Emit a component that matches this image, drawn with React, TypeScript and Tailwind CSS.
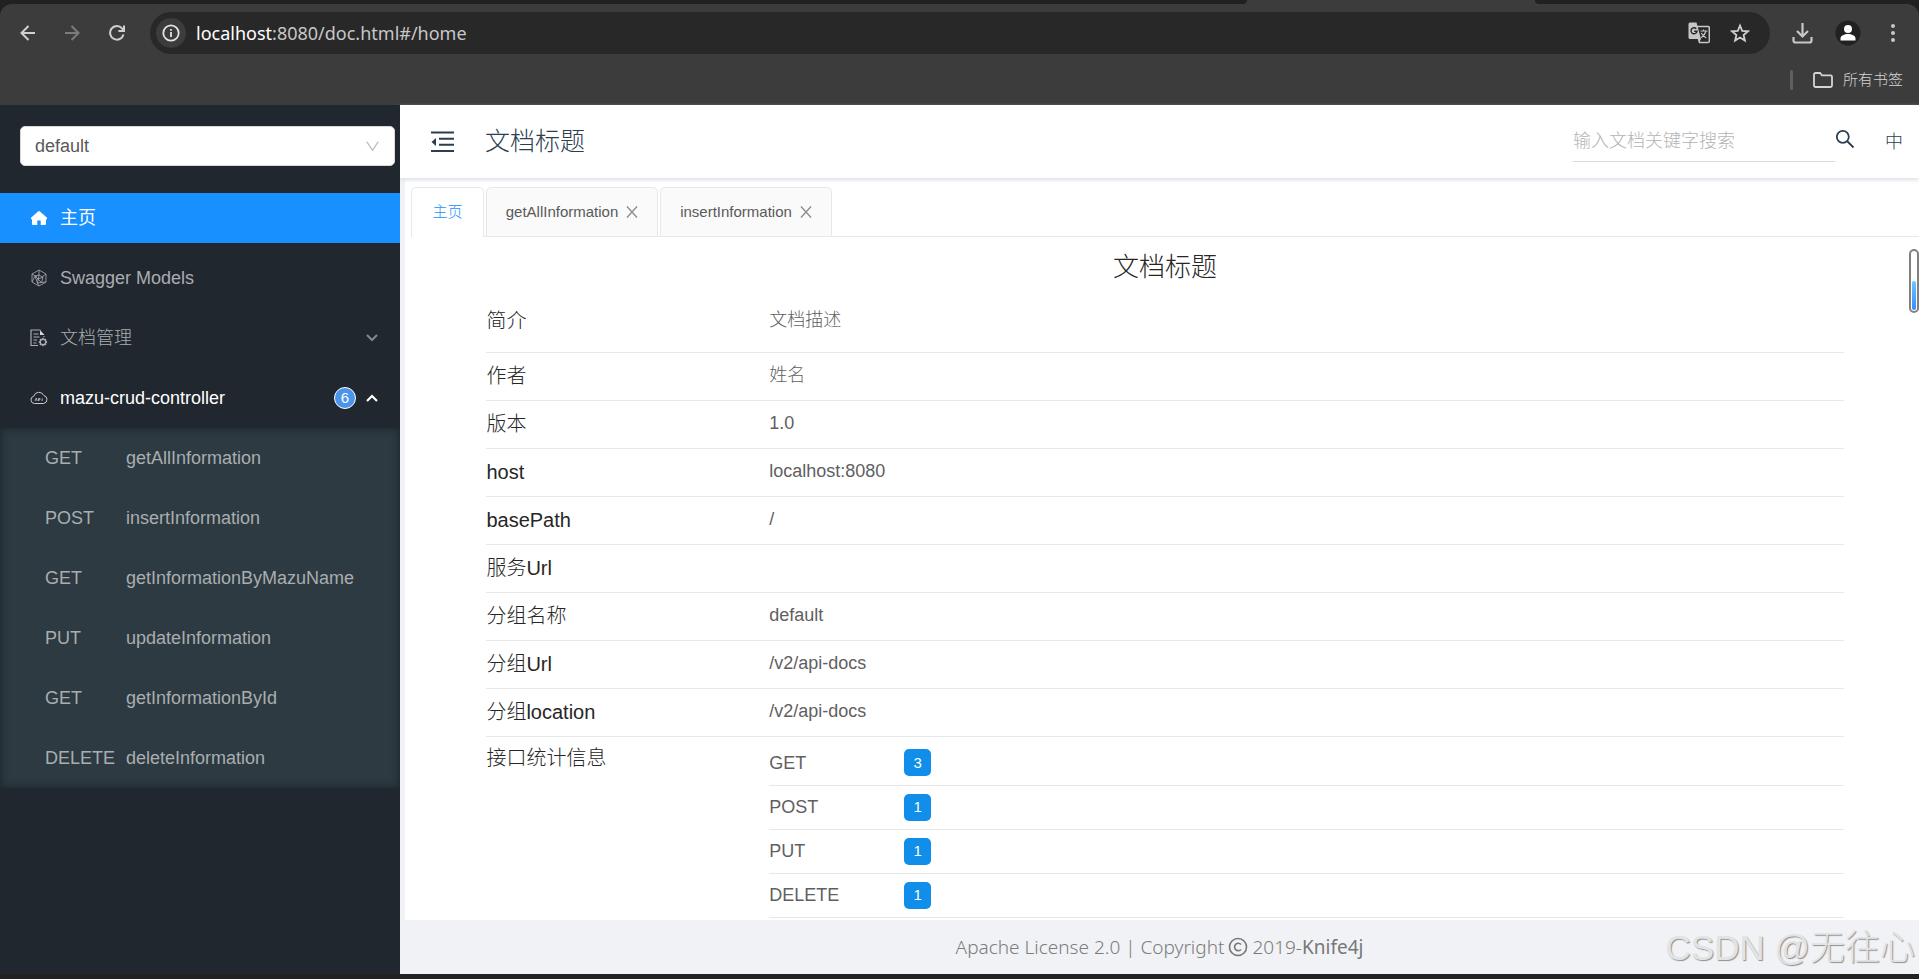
import type { ReactNode } from 'react'

const endpoints = [
  { method: 'GET', name: 'getAllInformation' },
  { method: 'POST', name: 'insertInformation' },
  { method: 'GET', name: 'getInformationByMazuName' },
  { method: 'PUT', name: 'updateInformation' },
  { method: 'GET', name: 'getInformationById' },
  { method: 'DELETE', name: 'deleteInformation' },
]

const details = [
  { label: '作者', value: '姓名' },
  { label: '版本', value: '1.0' },
  { label: 'host', value: 'localhost:8080' },
  { label: 'basePath', value: '/' },
  { label: '服务Url', value: '' },
  { label: '分组名称', value: 'default' },
  { label: '分组Url', value: '/v2/api-docs' },
  { label: '分组location', value: '/v2/api-docs' },
]

const stats = [
  { method: 'GET', count: 3 },
  { method: 'POST', count: 1 },
  { method: 'PUT', count: 1 },
  { method: 'DELETE', count: 1 },
]

const openTabs = ['getAllInformation', 'insertInformation']

function BrowserBar() {
  return (
    <header className="shrink-0 bg-[#202120] font-['Noto_Sans','Noto_Sans_CJK_SC',sans-serif]">
      <div className="flex h-1 justify-between bg-[#3c3c3c]">
        <div className="w-[65%] rounded-br-xl bg-[#202120]" />
        <div className="w-1/5 rounded-bl-xl bg-[#202120]" />
      </div>
      <div className="rounded-t-xl bg-[#3c3c3c] pt-2">
        <div className="flex h-[42px] items-center">
          <button aria-label="Back" className="ml-[18px] flex size-5 items-center justify-center text-[#d0d0d0]">
            <svg width="16" height="16" viewBox="0 0 16 16" fill="none" stroke="currentColor" strokeWidth="2">
              <path d="M15 8H2M8.5 1 1.5 8l7 7" />
            </svg>
          </button>
          <button aria-label="Forward" className="ml-6 flex size-5 items-center justify-center text-[#7c7c7c]">
            <svg width="16" height="16" viewBox="0 0 16 16" fill="none" stroke="currentColor" strokeWidth="2">
              <path d="M1 8h13M7.5 1l7 7-7 7" />
            </svg>
          </button>
          <button aria-label="Reload" className="ml-[25px] flex size-5 items-center justify-center text-[#d0d0d0]">
            <svg width="16" height="16" viewBox="0 0 16 16" fill="none" stroke="currentColor" strokeWidth="2">
              <path d="M14.5 9.5A6.8 6.8 0 1 1 13 3.3L14.8 5.500M15 .5v5.600H9.400" />
            </svg>
          </button>
          <div className="ml-[23px] flex h-[42px] flex-1 items-center rounded-full bg-[#282828] pr-5 pl-[6px]">
            <button aria-label="Site information" className="flex size-[30px] items-center justify-center rounded-full bg-[#3c3c3c] text-[#e3e3e3]">
              <svg width="18" height="18" viewBox="0 0 18 18" fill="none" stroke="currentColor" strokeWidth="1.8">
                <circle cx="9" cy="9" r="7.7" />
                <path d="M9 8v5M9 5v1.8" />
              </svg>
            </button>
            <div className="ml-[10px] flex-1 text-lg text-[#c7c7c7]">
              <span className="text-white">localhost</span>:8080/doc.html#/home
            </div>
            <button aria-label="Translate" className="text-[#c7c7c7]">
              <svg width="22" height="22" viewBox="0 0 22 22">
                <path d="M9 4.500h11a1.300 1.300 0 0 1 1.300 1.300v13.400a1.300 1.300 0 0 1-1.300 1.300h-8.500L10.500 17" fill="none" stroke="currentColor" strokeWidth="1.500" />
                <path d="M2 .5h6.500L13 17H2A1.500 1.500 0 0 1 .5 15.500V2A1.500 1.500 0 0 1 2 .5Z" fill="currentColor" />
                <path d="M8.300 6.800A3 3 0 1 0 9 9.300H6.200" fill="none" stroke="#282828" strokeWidth="1.400" />
                <path d="M12.500 9h7M15.600 7.500V9M18 9c-.7 3-2.500 5-4.800 6.700M13.300 11c1 2 2.700 3.700 5 5" fill="none" stroke="currentColor" strokeWidth="1.200" />
                <path d="M10.300 17H13l-1.600 3Z" fill="currentColor" />
              </svg>
            </button>
            <button aria-label="Bookmark" className="ml-5 text-[#d0d0d0]">
              <svg width="20" height="20" viewBox="0 0 20 20" fill="none" stroke="currentColor" strokeWidth="1.800">
                <path d="m10 2.500 2.200 5.300 5.700.5-4.300 3.700 1.300 5.600-4.900-3-4.900 3 1.300-5.600-4.300-3.700 5.700-.5Z" />
              </svg>
            </button>
          </div>
          <button aria-label="Downloads" className="ml-[22px] text-[#c7c7c7]">
            <svg width="21" height="21" viewBox="0 0 21 21" fill="none" stroke="currentColor" strokeWidth="2.200">
              <path d="M10.500 0v13M5 8l5.500 5.500L16 8M1.500 14v3.500a2 2 0 0 0 2 2h14a2 2 0 0 0 2-2V14" />
            </svg>
          </button>
          <button aria-label="Profile" className="ml-[22px]">
            <svg width="26" height="26" viewBox="0 0 26 26">
              <circle cx="13" cy="13" r="12.500" fill="#202120" />
              <circle cx="13" cy="9" r="4" fill="#fff" />
              <path d="M5.500 20.500v-2c0-3 4-4.500 7.500-4.500s7.500 1.500 7.500 4.500v2Z" fill="#fff" />
            </svg>
          </button>
          <button aria-label="Menu" className="mr-6 ml-[30px] text-[#c7c7c7]">
            <svg width="4" height="20" viewBox="0 0 4 20" fill="currentColor">
              <circle cx="2" cy="3" r="2" />
              <circle cx="2" cy="10" r="2" />
              <circle cx="2" cy="17" r="2" />
            </svg>
          </button>
        </div>
        <div className="flex h-[51px] items-center justify-end pr-4">
          <div className="mr-5 h-5 w-[3px] rounded bg-[#5f5f5f]" />
          <button className="flex items-center gap-[10px] text-[15px] font-light text-[#d4d4d4]">
            <svg width="20" height="16" viewBox="0 0 20 16" fill="none" stroke="currentColor" strokeWidth="1.800">
              <path d="M1 2.500A1.500 1.500 0 0 1 2.500 1H7l2 2.300h8.500A1.500 1.500 0 0 1 19 4.800v8.700a1.500 1.500 0 0 1-1.500 1.500h-15A1.500 1.500 0 0 1 1 13.500Z" />
            </svg>
            所有书签
          </button>
        </div>
      </div>
    </header>
  )
}

function MenuItem({ icon, children, active }: { icon: ReactNode; children: ReactNode; active?: boolean }) {
  return (
    <a
      href="#"
      className={
        active
          ? 'my-[5px] flex h-[50px] items-center gap-3 bg-[#1890ff] pr-[22px] pl-[30px] text-white'
          : 'my-[5px] flex h-[50px] items-center gap-3 pr-[22px] pl-[30px]'
      }
    >
      {icon}
      {children}
    </a>
  )
}

function Sidebar() {
  return (
    <aside className="z-10 w-[400px] shrink-0 overflow-hidden bg-[#20272e] text-[#a9adb0]">
      <div className="relative mt-[21px] mb-[22px] ml-5 w-[375px]">
        <select
          aria-label="Group"
          className="h-10 w-full appearance-none rounded-[5px] border border-[#d9d9d9] bg-white px-[14px] text-lg text-[#595959]"
        >
          <option>default</option>
        </select>
        <svg className="pointer-events-none absolute top-[15px] right-4" width="13" height="11" viewBox="0 0 13 11" fill="none" stroke="#bfbfbf" strokeWidth="1.400">
          <path d="m.7.7 5.800 8.600L12.300.7" />
        </svg>
      </div>
      <nav className="flex flex-col text-lg">
        <MenuItem
          active
          icon={
            <svg width="18" height="18" viewBox="0 0 18 18" fill="currentColor">
              <path d="M8.300 2.300a1 1 0 0 1 1.400 0L17 8.800v1.400h-1V15a1 1 0 0 1-1 1h-4.300v-4.500H7.300V16H3a1 1 0 0 1-1-1v-4.800H1V8.800Z" />
            </svg>
          }
        >
          主页
        </MenuItem>
        <MenuItem
          icon={
            <svg width="18" height="18" viewBox="0 0 18 18" fill="none" stroke="currentColor">
              <path d="m9 1 7 4v8l-7 4-7-4V5ZM9 1v5M2 5l5 3M16 5l-4 3M5 7l4-1 4 2.500-1.500 5-4 .5L5 7Zm0 0-3 6M7.500 14 9 17M11.500 13.500 16 13M9 6l-1.500 8M5 7l6.500 6.500M13 8.500 7 10" strokeWidth=".8" />
            </svg>
          }
        >
          Swagger Models
        </MenuItem>
        <MenuItem
          icon={
            <svg width="18" height="18" viewBox="0 0 18 18" fill="none" stroke="currentColor">
              <path d="M8 16.500H1V1h9.500M14 7v1M3.500 5h5M3.500 8h6M3.500 11h3.500M3.500 14h3" strokeWidth="1.200" />
              <path d="M10 1v5h4.500Z" fill="#d8d8d8" stroke="none" />
              <circle cx="13" cy="13" r="2.800" strokeWidth="1.400" />
              <path d="M13 8.800v1.400M13 15.800v1.400M8.800 13h1.400M15.800 13h1.400M10 10l1 1M15 15l1 1M16 10l-1 1M11 15l-1 1" strokeWidth="1.400" />
            </svg>
          }
        >
          <span className="flex-1 font-light">文档管理</span>
          <svg width="12" height="8" viewBox="0 0 12 8" fill="none" stroke="#83888c" strokeWidth="2">
            <path d="m1 1 5 5 5-5" />
          </svg>
        </MenuItem>
        <MenuItem
          icon={
            <svg width="18" height="18" viewBox="0 0 18 18" fill="none" stroke="#c8cacc">
              <path d="M4.500 14.500a3.700 3.700 0 0 1-.7-7.300 5.300 5.300 0 0 1 10-.7 4.100 4.100 0 0 1 0 8Z" />
              <path d="m5 12 1.300-3 .9 3M8.500 12V9.500h1.600l-.3 1.500H8.500M12 12l.4-2.700" strokeWidth=".8" />
            </svg>
          }
        >
          <span className="flex-1 text-white">mazu-crud-controller</span>
          <span className="flex items-center gap-[10px]">
            <span className="flex size-[22px] items-center justify-center rounded-full border border-white bg-[#4a95e9] text-[15px] text-white">
              6
            </span>
            <svg width="12" height="8" viewBox="0 0 12 8" fill="none" stroke="#fff" strokeWidth="2.200">
              <path d="m1 7 5-5 5 5" />
            </svg>
          </span>
        </MenuItem>
        <ul className="flex flex-col bg-[#2d3a41] shadow-[inset_0_0_10px_#1c2328]">
          {endpoints.map(({ method, name }) => (
            <li key={name} className="py-[5px]">
              <a href="#" className="flex h-[50px] items-center pl-[45px]">
                <span className="w-[81px]">{method}</span>
                {name}
              </a>
            </li>
          ))}
        </ul>
      </nav>
    </aside>
  )
}

function TopHeader() {
  return (
    <div className="relative flex h-[73px] shrink-0 items-center bg-white pr-4 pl-[31px] text-[#2c3e50] shadow-[0_2px_4px_#d9e0e6]">
      <button aria-label="Collapse menu">
        <svg width="23" height="22" viewBox="0 0 23 22" fill="none" stroke="currentColor" strokeWidth="2">
          <path d="M0 1.500h23M8 7.700h15M8 13.700h15M0 20h23" />
          <path d="M5 7v8L.5 11Z" fill="currentColor" stroke="none" />
        </svg>
      </button>
      <h1 className="ml-[31px] flex-1 text-[25px] font-light">文档标题</h1>
      <input
        type="text"
        aria-label="输入文档关键字搜索"
        placeholder="输入文档关键字搜索"
        className="h-10 w-[262px] border-b border-[#d9d9d9] text-lg font-light placeholder:text-[#b4b4b4]"
      />
      <button aria-label="Search" className="pb-[5px]">
        <svg width="20" height="20" viewBox="0 0 20 20" fill="none" stroke="currentColor" strokeWidth="1.800">
          <circle cx="7.800" cy="7.800" r="6" />
          <path d="m12 12 6.500 6.500" />
        </svg>
      </button>
      <button className="ml-[30px] text-lg font-light">中</button>
    </div>
  )
}

function TabBar() {
  return (
    <div role="tablist" className="flex h-[50px] items-end gap-[2px] text-[15px] text-[#595959] shadow-[inset_0_-1px_0_#e8e8e8]">
      <button role="tab" aria-selected="true" className="h-[50px] w-[73px] rounded-t-[5px] border border-b-0 border-[#e8e8e8] bg-white font-light text-[#1890ff]">
        主页
      </button>
      {openTabs.map((tab) => (
        <div key={tab} className="flex h-[50px] w-[172px] items-center justify-center gap-2 rounded-t-[5px] border border-[#e8e8e8] bg-[#fafafa]">
          <button role="tab">{tab}</button>
          <button aria-label={'Close ' + tab}>
            <svg width="12" height="12" viewBox="0 0 12 12" stroke="#8c8c8c" strokeWidth="1.300">
              <path d="m1 .5 10 11M11 .5 1 11.500" />
            </svg>
          </button>
        </div>
      ))}
    </div>
  )
}

function ApiInfo() {
  return (
    <section className="mx-auto w-[90%] text-lg font-light text-[#5f5f5f]">
      <h2 className="pt-[9px] text-center text-[26px] leading-[42px] text-[#262626]">文档标题</h2>
      <dl>
        <div className="flex h-[65px] border-b border-[#e8e8e8] pt-[14px]">
          <dt className="w-5/24 text-xl leading-[38px] text-[#262626]">简介</dt>
          <dd className="leading-[36px]">文档描述</dd>
        </div>
        {details.map(({ label, value }) => (
          <div key={label} className="flex h-12 border-b border-[#e8e8e8] pt-1">
            <dt className="w-5/24 text-xl leading-[38px] text-[#262626]">{label}</dt>
            <dd className="leading-[36px]">{value}</dd>
          </div>
        ))}
        <div className="flex">
          <dt className="w-5/24 pt-[2px] text-xl leading-[38px] text-[#262626]">接口统计信息</dt>
          <dd className="flex-1 pt-1">
            <table className="w-full table-fixed text-left">
              <tbody>
                {stats.map(({ method, count }) => (
                  <tr key={method} className="h-11 border-b border-[#e8e8e8]">
                    <th scope="row" className="w-[135px] font-normal">
                      {method}
                    </th>
                    <td>
                      <span className="flex size-[27px] items-center justify-center rounded-[5px] bg-[#108ee9] text-[15px] text-white">
                        {count}
                      </span>
                    </td>
                  </tr>
                ))}
              </tbody>
            </table>
          </dd>
        </div>
      </dl>
    </section>
  )
}

export default function App() {
  return (
    <div className="flex h-screen flex-col overflow-hidden bg-[#202120] font-['Liberation_Sans','Noto_Sans_CJK_SC',sans-serif]">
      <BrowserBar />
      <div className="mb-[5px] flex min-h-0 flex-1">
        <Sidebar />
        <main className="relative flex min-w-0 flex-1 flex-col bg-[#f0f2f5]">
          <TopHeader />
          <div className="ml-[5px] min-h-0 flex-1 overflow-hidden bg-white pt-[9px] pl-[6px]">
            <TabBar />
            <ApiInfo />
          </div>
          <footer className="flex h-[54px] shrink-0 items-center justify-center gap-1 font-['Noto_Sans','Noto_Sans_CJK_SC',sans-serif] text-[19px] font-light text-[#7c7c7c]">
            Apache License 2.0 | Copyright
            <svg width="20" height="20" viewBox="0 0 20 20" fill="none" stroke="#777" strokeWidth="1.600">
              <circle cx="10" cy="10" r="8.500" />
              <path d="M13 7.500a3.700 3.700 0 1 0 0 5" />
            </svg>
            <span>
              2019-
              <a href="#" className="font-normal text-[#777]">
                Knife4j
              </a>
            </span>
          </footer>
          {/* reading progress thumb */}
          <div className="absolute top-[144px] right-0 flex h-16 w-[10px] items-end justify-center rounded-full border-2 border-[#808080] bg-white pb-px">
            <div className="h-[29px] w-1 rounded-full bg-linear-to-b from-[#6cc5ff] to-[#3a8bff]" />
          </div>
          <div className="absolute right-1 bottom-1 text-[35px] leading-[44px] font-light whitespace-nowrap text-[#e2e3e5] [text-shadow:1px_1px_1px_#8f8f8f]">
            CSDN @无往心
          </div>
        </main>
      </div>
    </div>
  )
}
